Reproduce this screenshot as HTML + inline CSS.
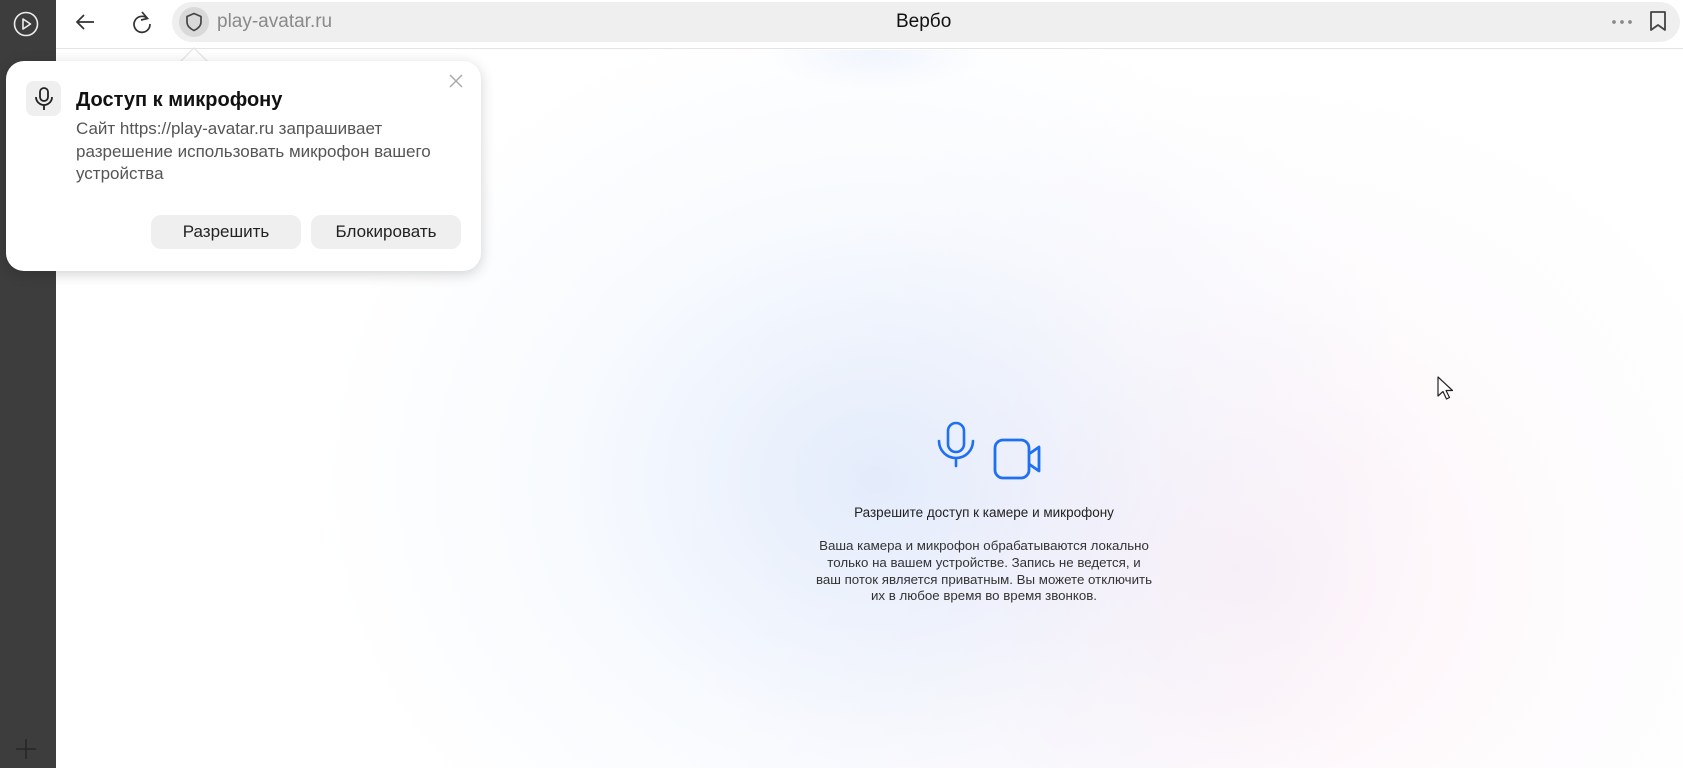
<!DOCTYPE html>
<html><head><meta charset="utf-8"><style>
*{margin:0;padding:0;box-sizing:border-box}
body{width:1683px;height:768px;overflow:hidden;position:relative;background:#fff;font-family:"Liberation Sans","DejaVu Sans",sans-serif}
.side{position:absolute;left:0;top:0;width:56px;height:768px;background:#3d3d3d}
.main{position:absolute;left:56px;top:50px;right:0;bottom:0;
background:
radial-gradient(ellipse 560px 480px at 820px 430px, rgba(210,225,250,0.6), rgba(225,235,252,0.25) 55%, rgba(255,255,255,0) 100%),
radial-gradient(ellipse 560px 500px at 1180px 520px, rgba(250,228,240,0.55), rgba(250,235,244,0.2) 55%, rgba(255,255,255,0) 100%),
radial-gradient(ellipse 110px 40px at 820px 0px, rgba(220,230,250,0.4), rgba(255,255,255,0) 100%),
#fff}
.top{position:absolute;left:56px;top:0;right:0;height:49px;background:#fff;border-bottom:1px solid #e4e4e4}
.bar{position:absolute;left:172px;top:2px;width:1508px;height:40px;background:#efefef;border-radius:20px}
.popup{position:absolute;left:6px;top:61px;width:475px;height:210px;background:#fff;border-radius:18px;box-shadow:0 3px 14px rgba(0,0,0,0.18)}
.btn{position:absolute;top:154px;width:150px;height:34px;background:#efefef;border-radius:10px;font-size:17px;color:#222;text-align:center;line-height:34px}
</style></head><body>
<div class="side">
<svg style="position:absolute;left:13px;top:11px" width="26" height="26" viewBox="0 0 26 26"><circle cx="13" cy="13" r="11.5" fill="none" stroke="#eee" stroke-width="1.6"/><path d="M10 8 L17.5 13 L10 18 Z" fill="none" stroke="#eee" stroke-width="1.6" stroke-linejoin="round"/></svg>
<svg style="position:absolute;left:16px;top:739px" width="20" height="20"><path d="M10 0V20M0 10H20" stroke="#222" stroke-width="1.3"/></svg>
</div>
<div class="main"></div>
<div class="top">
<svg style="position:absolute;left:18px;top:12px" width="22" height="20"><path d="M20 10H3M10 3L3 10L10 17" fill="none" stroke="#333" stroke-width="1.7"/></svg>
<svg style="position:absolute;left:75px;top:10px" width="22" height="24" viewBox="0 0 22 24"><path d="M16.5 8.5A8 8 0 1 0 19 14" fill="none" stroke="#333" stroke-width="1.7"/><path d="M11 2L16.5 8.5L10 10" fill="none" stroke="#333" stroke-width="1.7"/></svg>
</div>
<div class="bar">
<div style="position:absolute;left:7px;top:5px;width:30px;height:30px;border-radius:50%;background:#d9d9d9"></div>
<svg style="position:absolute;left:13px;top:10px" width="18" height="20" viewBox="0 0 18 20"><path d="M9 1.5L16 4.5V10C16 14 12.5 17 9 18.5C5.5 17 2 14 2 10V4.5Z" fill="none" stroke="#444" stroke-width="1.7" stroke-linejoin="round"/></svg>
<div style="position:absolute;left:45px;top:9px;font-size:19px;color:#8a8a8a">play-avatar.ru</div>
<div style="position:absolute;left:724px;top:9px;font-size:19px;color:#111">Вербо</div>
<div style="position:absolute;left:1440px;top:18px;width:22px;height:4px;background:radial-gradient(circle 2px at 2px 2px,#888 1.7px,transparent 2px) 0 0/8px 4px repeat-x"></div>
<svg style="position:absolute;left:1477px;top:8px" width="18" height="22" viewBox="0 0 18 22"><path d="M2 2H16V20L9 15L2 20Z" fill="none" stroke="#444" stroke-width="1.8" stroke-linejoin="round"/></svg>
</div>
<svg style="position:absolute;left:180px;top:47px" width="28" height="16"><path d="M0 15L14 1L28 15" fill="#fff" stroke="#e0e0e0"/></svg>
<div class="popup">
<div style="position:absolute;left:20px;top:20px;width:35px;height:35px;background:#efefef;border-radius:8px"></div>
<svg style="position:absolute;left:27px;top:25px" width="22" height="26" viewBox="0 0 22 26"><rect x="7" y="2" width="8" height="13" rx="4" fill="none" stroke="#222" stroke-width="1.8"/><path d="M3 11A8 8 0 0 0 19 11M11 19V24" fill="none" stroke="#222" stroke-width="1.8"/></svg>
<svg style="position:absolute;left:443px;top:13px" width="14" height="14"><path d="M1 1L13 13M13 1L1 13" stroke="#aaa" stroke-width="1.5"/></svg>
<div style="position:absolute;left:70px;top:28px;font-size:20px;font-weight:bold;color:#111">Доступ к микрофону</div>
<div style="position:absolute;left:70px;top:57px;width:390px;font-size:17px;line-height:22.5px;color:#555">Сайт https://play-avatar.ru запрашивает разрешение использовать микрофон вашего устройства</div>
<div class="btn" style="left:145px">Разрешить</div>
<div class="btn" style="left:305px">Блокировать</div>
</div>
<svg style="position:absolute;left:935px;top:420px" width="42" height="50" viewBox="0 0 42 50"><rect x="13" y="3" width="16" height="29" rx="8" fill="none" stroke="#1f6ff2" stroke-width="2.6"/><path d="M4 21A17 17 0 0 0 38 21M21 38V46" fill="none" stroke="#1f6ff2" stroke-width="2.6" stroke-linecap="round"/></svg>
<svg style="position:absolute;left:992px;top:437px" width="52" height="44" viewBox="0 0 52 44"><rect x="3" y="3" width="34" height="38" rx="8" fill="none" stroke="#1f6ff2" stroke-width="2.8"/><path d="M37 17L47 10V34L37 27" fill="none" stroke="#1f6ff2" stroke-width="2.8" stroke-linejoin="round"/></svg>
<div style="position:absolute;left:784px;width:400px;top:505px;text-align:center;font-size:13.5px;color:#222">Разрешите доступ к камере и микрофону</div>
<div style="position:absolute;left:784px;width:400px;top:538px;text-align:center;font-size:13.3px;line-height:16.8px;color:#333">Ваша камера и микрофон обрабатываются локально<br>только на вашем устройстве. Запись не ведется, и<br>ваш поток является приватным. Вы можете отключить<br>их в любое время во время звонков.</div>
<svg style="position:absolute;left:1437px;top:376px" width="18" height="26" viewBox="0 0 18 26"><path d="M1 1V20L6 15.5L9.5 23L12.5 21.5L9 14.5H15.5Z" fill="#fff" stroke="#222" stroke-width="1.2" stroke-linejoin="round"/></svg>
</body></html>
